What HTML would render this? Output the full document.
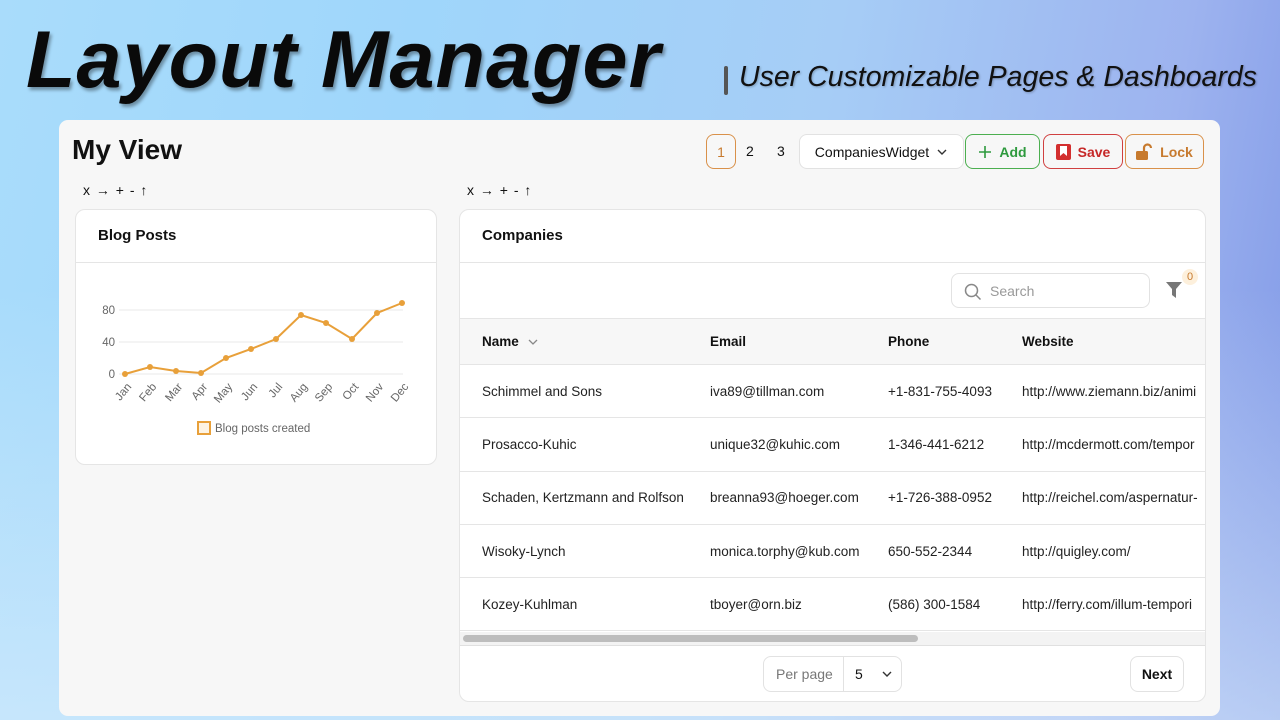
<!DOCTYPE html>
<html><head><meta charset="utf-8"><style>
*{box-sizing:border-box;margin:0;padding:0}
body{width:1280px;height:720px;overflow:hidden;font-family:"Liberation Sans",sans-serif;position:relative;
background:linear-gradient(100deg,#a9dcfb 0%,#9fd6fb 30%,#a6cdf6 60%,#9db3ef 85%,#7f97e6 100%)}
.bg2{position:absolute;left:0;top:0;width:1280px;height:720px;background:linear-gradient(180deg,rgba(255,255,255,0) 40%,rgba(220,238,252,.6) 100%)}
.title{position:absolute;left:26px;top:14px;font-size:81px;font-weight:bold;font-style:italic;color:#0a0a0a;letter-spacing:1px;text-shadow:2px 3px 3px rgba(0,0,0,.35)}
.bar{position:absolute;left:724px;top:66px;width:4px;height:29px;background:#555;border-radius:2px}
.sub{position:absolute;left:739px;top:61px;font-size:28.5px;font-style:italic;color:#111;text-shadow:1px 1px 2px rgba(0,0,0,.25)}
.panel{position:absolute;left:59px;top:120px;width:1161px;height:596px;background:#f7f7f7;border-radius:9px}
.abs{position:absolute}
.mv{left:13px;top:14px;font-size:28px;font-weight:bold;color:#111}
.btn{position:absolute;top:14px;height:35px;border-radius:8px;border:1px solid;font-size:14px;display:flex;align-items:center;justify-content:center;gap:7px;font-weight:500}
.ctl{font-size:14px;color:#111;letter-spacing:1px}
.card{position:absolute;background:#fff;border:1px solid #e5e5e5;border-radius:10px;overflow:hidden}
.ch{height:53px;border-bottom:1px solid #e5e5e5;padding:17px 22px;font-size:15px;font-weight:bold;color:#111}
table{border-collapse:collapse;position:absolute;left:0;top:108px;font-size:13.5px;color:#222;table-layout:fixed;width:770px}
td,th{text-align:left;padding:0 0 0 22px;white-space:nowrap;border-bottom:1px solid #e5e5e5;overflow:visible}
th{height:46px;background:#f7f7f7;font-weight:bold;color:#111;border-top:1px solid #e5e5e5}
td{height:53.3px}
</style></head><body>
<div class="bg2"></div>
<div class="title">Layout Manager</div>
<div class="bar"></div>
<div class="sub">User Customizable Pages &amp; Dashboards</div>
<div class="panel">
 <div class="abs mv">My View</div>
 <div class="btn" style="left:647px;width:30px;border-color:#d9914a;color:#c77a2e">1</div>
 <div class="abs" style="left:687px;top:23px;font-size:14px;color:#111">2</div>
 <div class="abs" style="left:718px;top:23px;font-size:14px;color:#111">3</div>
 <div class="btn" style="left:740px;width:165px;border-color:#e2e2e2;background:#fff;color:#111">CompaniesWidget <svg width="12" height="8" viewBox="0 0 12 8"><path d="M2 2l4 4 4-4" stroke="#333" stroke-width="1.4" fill="none"/></svg></div>
 <div class="btn" style="left:906px;width:75px;border-color:#4caf50;color:#2e9a3e;font-weight:bold"><svg width="14" height="14"><path d="M7 1v12M1 7h12" stroke="#2e9a3e" stroke-width="1.6"/></svg>Add</div>
 <div class="btn" style="left:984px;width:80px;border-color:#d04040;color:#c62828;font-weight:bold"><svg width="15" height="16"><rect x="0" y="0" width="15" height="16" rx="2" fill="#d32f2f"/><path d="M4 2h7v10l-3.5-3-3.5 3z" fill="#fff"/></svg>Save</div>
 <div class="btn" style="left:1066px;width:79px;border-color:#d9914a;color:#c77a2e;font-weight:bold"><svg width="17" height="17"><path d="M8 8V5a3.5 3.5 0 017 0" stroke="#c77a2e" stroke-width="2.2" fill="none"/><rect x="0" y="8" width="12" height="9" rx="1.5" fill="#c77a2e"/></svg>Lock</div>
 <div class="abs ctl" style="left:24px;top:62px">x → + - ↑</div>
 <div class="abs ctl" style="left:408px;top:62px">x → + - ↑</div>
</div>
<div class="card" style="left:75px;top:209px;width:362px;height:256px">
 <div class="ch">Blog Posts</div>
 <svg class="abs" style="left:-75px;top:-209px" width="440" height="470">
  <g stroke="#e8e8e8" stroke-width="1"><line x1="118" y1="309" x2="402" y2="309"/><line x1="118" y1="341" x2="402" y2="341"/><line x1="118" y1="373" x2="402" y2="373"/></g>
  <g font-size="11.5" fill="#666" font-family="Liberation Sans"><text x="114" y="313" text-anchor="end">80</text><text x="114" y="345" text-anchor="end">40</text><text x="114" y="377" text-anchor="end">0</text></g>
  <polyline fill="none" stroke="#e8a03a" stroke-width="2" points="124,373 149,366 175,370 200,372 225,357 250,348 275,338 300,314 325,322 351,338 376,312 401,302"/>
  <g fill="#e8a03a"><circle cx="124" cy="373" r="3"/><circle cx="149" cy="366" r="3"/><circle cx="175" cy="370" r="3"/><circle cx="200" cy="372" r="3"/><circle cx="225" cy="357" r="3"/><circle cx="250" cy="348" r="3"/><circle cx="275" cy="338" r="3"/><circle cx="300" cy="314" r="3"/><circle cx="325" cy="322" r="3"/><circle cx="351" cy="338" r="3"/><circle cx="376" cy="312" r="3"/><circle cx="401" cy="302" r="3"/></g>
  <g font-size="11.5" fill="#666" font-family="Liberation Sans" text-anchor="end">
   <text transform="translate(131,386) rotate(-50)">Jan</text><text transform="translate(156,386) rotate(-50)">Feb</text><text transform="translate(182,386) rotate(-50)">Mar</text><text transform="translate(207,386) rotate(-50)">Apr</text><text transform="translate(232,386) rotate(-50)">May</text><text transform="translate(257,386) rotate(-50)">Jun</text><text transform="translate(282,386) rotate(-50)">Jul</text><text transform="translate(307,386) rotate(-50)">Aug</text><text transform="translate(332,386) rotate(-50)">Sep</text><text transform="translate(358,386) rotate(-50)">Oct</text><text transform="translate(383,386) rotate(-50)">Nov</text><text transform="translate(408,386) rotate(-50)">Dec</text>
  </g>
  <rect x="197" y="421" width="12" height="12" fill="#fdf3e3" stroke="#e8a03a" stroke-width="2"/>
  <text x="214" y="431" font-size="11.5" fill="#666" font-family="Liberation Sans">Blog posts created</text>
 </svg>
</div>
<div class="card" style="left:459px;top:209px;width:747px;height:493px">
 <div class="ch">Companies</div>
 <div class="abs" style="left:491px;top:63px;width:199px;height:35px;border:1px solid #e2e2e2;border-radius:8px;background:#fff;font-size:14px;color:#999;padding:9px 0 0 38px">Search
  <svg class="abs" style="left:12px;top:9px" width="18" height="18"><circle cx="7.5" cy="7.5" r="6" stroke="#888" stroke-width="1.5" fill="none"/><path d="M12 12l4.5 4.5" stroke="#888" stroke-width="1.5"/></svg></div>
 <svg class="abs" style="left:705px;top:71px" width="18" height="18"><path d="M1 1h16l-6 7v9l-4-3V8z" fill="#777"/></svg>
 <div class="abs" style="left:722px;top:59px;width:16px;height:16px;border-radius:8px;background:#fdf0dc;color:#c77a2e;font-size:11px;text-align:center;line-height:16px">0</div>
 <table>
  <colgroup><col style="width:228px"><col style="width:178px"><col style="width:134px"><col style="width:230px"></colgroup>
  <tr><th>Name <svg width="12" height="8" viewBox="0 0 12 8" style="margin-left:4px"><path d="M2 2l4 4 4-4" stroke="#888" stroke-width="1.3" fill="none"/></svg></th><th>Email</th><th>Phone</th><th>Website</th></tr>
  <tr><td>Schimmel and Sons</td><td>iva89@tillman.com</td><td>+1-831-755-4093</td><td>http://www.ziemann.biz/animi</td></tr>
  <tr><td>Prosacco-Kuhic</td><td>unique32@kuhic.com</td><td>1-346-441-6212</td><td>http://mcdermott.com/tempor</td></tr>
  <tr><td>Schaden, Kertzmann and Rolfson</td><td>breanna93@hoeger.com</td><td>+1-726-388-0952</td><td>http://reichel.com/aspernatur-</td></tr>
  <tr><td>Wisoky-Lynch</td><td>monica.torphy@kub.com</td><td>650-552-2344</td><td>http://quigley.com/</td></tr>
  <tr><td>Kozey-Kuhlman</td><td>tboyer@orn.biz</td><td>(586) 300-1584</td><td>http://ferry.com/illum-tempori</td></tr>
 </table>
 <div class="abs" style="left:0;top:422px;width:747px;height:14px;background:#f3f3f3;border-bottom:1px solid #e0e0e0"></div>
 <div class="abs" style="left:3px;top:425px;width:455px;height:7px;border-radius:4px;background:#bdbdbd"></div>
 <div class="abs" style="left:303px;top:446px;width:139px;height:36px;border:1px solid #e2e2e2;border-radius:8px;font-size:14px">
  <span class="abs" style="left:12px;top:9px;color:#777">Per page</span>
  <span class="abs" style="left:79px;top:0;width:1px;height:34px;background:#e2e2e2"></span>
  <span class="abs" style="left:91px;top:9px;color:#111">5</span>
  <svg class="abs" style="left:117px;top:13px" width="12" height="8" viewBox="0 0 12 8"><path d="M2 2l4 4 4-4" stroke="#333" stroke-width="1.4" fill="none"/></svg>
 </div>
 <div class="abs" style="left:670px;top:446px;width:54px;height:36px;border:1px solid #e2e2e2;border-radius:8px;font-size:14px;font-weight:bold;color:#111;text-align:center;line-height:34px">Next</div>
</div>
</body></html>
